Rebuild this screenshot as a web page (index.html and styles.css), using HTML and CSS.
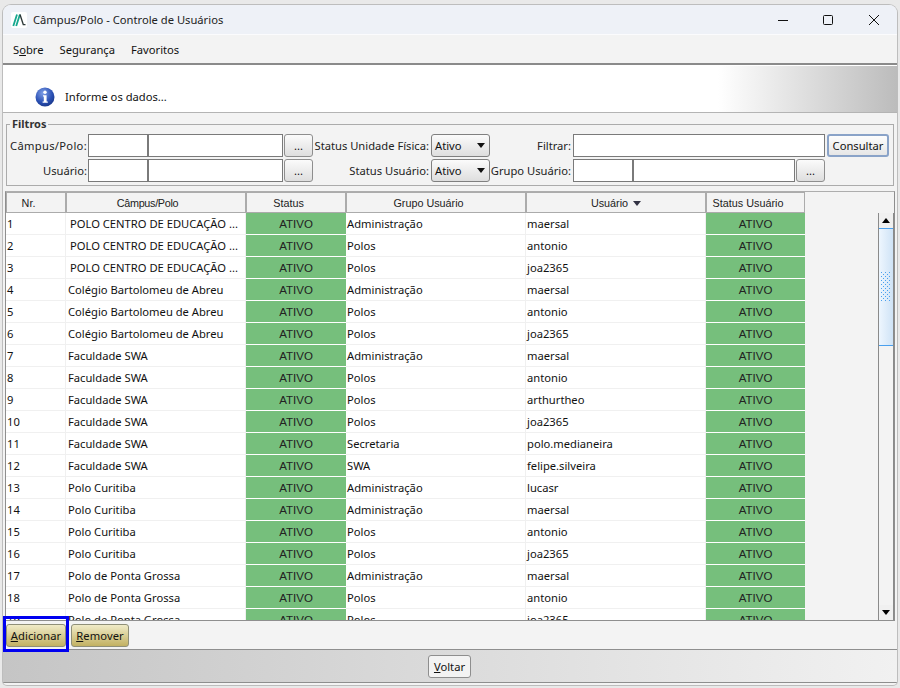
FILE: index.html
```html
<!DOCTYPE html>
<html lang="pt">
<head>
<meta charset="utf-8">
<title>Câmpus/Polo - Controle de Usuários</title>
<link rel="stylesheet" href="styles.css">
</head>
<body>
<div class="window">
  <header class="titlebar">
    <svg class="logo" width="16" height="16" viewBox="0 0 16 16"><rect width="16" height="16" rx="2" fill="#fff"/><path d="M2.3 14 6 2.5M5.2 14 8.9 2.5" stroke="#17a88e" stroke-width="1.8" fill="none"/><path d="M9 2.5 12.3 12.6H14.5" stroke="#2e3a3a" stroke-width="1.4" fill="none"/></svg>
    <span class="title">Câmpus/Polo - Controle de Usuários</span>
    <div class="winctl">
      <svg class="minbtn" width="12" height="12" viewBox="0 0 12 12"><path d="M1 6.5H11" stroke="#111" fill="none"/></svg>
      <svg width="12" height="12" viewBox="0 0 12 12"><rect x="1.5" y="1.5" width="9" height="9" rx="1" stroke="#111" fill="none"/></svg>
      <svg width="12" height="12" viewBox="0 0 12 12"><path d="M1 1 11 11M11 1 1 11" stroke="#111" fill="none"/></svg>
    </div>
  </header>
  <nav class="menubar">
    <span>S<u>o</u>bre</span><span>Segurança</span><span>Favoritos</span>
  </nav>
  <section class="infobar">
    <svg class="infoicon" width="20" height="20" viewBox="0 0 20 20">
      <defs><radialGradient id="ig" cx="0.4" cy="0.3" r="0.8"><stop offset="0" stop-color="#7f9fe6"/><stop offset="0.6" stop-color="#2a50b4"/><stop offset="1" stop-color="#14307e"/></radialGradient></defs>
      <circle cx="10" cy="10" r="9.5" fill="url(#ig)"/>
      <circle cx="10" cy="5.3" r="1.7" fill="#fff"/>
      <path d="M8 8.2H11.6V14.6H12.8V15.8H7.6V14.6H8.8V9.4H8Z" fill="#fff"/>
    </svg>
    <span>Informe os dados...</span>
  </section>
  <fieldset class="filters">
    <legend>Filtros</legend>
    <div class="frow">
      <label class="l1 wide">Câmpus/Polo:</label>
      <div class="pair"><input class="code"><input class="name"></div>
      <button class="dots">...</button>
      <label class="l2">Status Unidade Física:</label>
      <div class="select"><span>Ativo</span><i></i></div>
      <label class="l3">Filtrar:</label>
      <input class="search">
      <button class="consult">Consultar</button>
    </div>
    <div class="frow">
      <label class="l1">Usuário:</label>
      <div class="pair"><input class="code"><input class="name"></div>
      <button class="dots">...</button>
      <label class="l2">Status Usuário:</label>
      <div class="select"><span>Ativo</span><i></i></div>
      <label class="l3">Grupo Usuário:</label>
      <div class="pair"><input class="code"><input class="name2"></div>
      <button class="dots">...</button>
    </div>
  </fieldset>
  <section class="grid">
    <div class="tablewrap">
      <table>
        <colgroup><col class="c1"><col class="c2"><col class="c3"><col class="c2"><col class="c2"><col class="c4"></colgroup>
        <thead><tr><th>Nr.</th><th class="narrow">Câmpus/Polo</th><th>Status</th><th>Grupo Usuário</th><th class="sorted">Usuário <span class="sort"></span></th><th>Status Usuário</th></tr></thead>
        <tbody>
          <tr><td>1</td><td class="ind">POLO CENTRO DE EDUCAÇÃO ...</td><td class="on">ATIVO</td><td>Administração</td><td>maersal</td><td class="on">ATIVO</td></tr>
          <tr><td>2</td><td class="ind">POLO CENTRO DE EDUCAÇÃO ...</td><td class="on">ATIVO</td><td>Polos</td><td>antonio</td><td class="on">ATIVO</td></tr>
          <tr><td>3</td><td class="ind">POLO CENTRO DE EDUCAÇÃO ...</td><td class="on">ATIVO</td><td>Polos</td><td>joa2365</td><td class="on">ATIVO</td></tr>
          <tr><td>4</td><td>Colégio Bartolomeu de Abreu</td><td class="on">ATIVO</td><td>Administração</td><td>maersal</td><td class="on">ATIVO</td></tr>
          <tr><td>5</td><td>Colégio Bartolomeu de Abreu</td><td class="on">ATIVO</td><td>Polos</td><td>antonio</td><td class="on">ATIVO</td></tr>
          <tr><td>6</td><td>Colégio Bartolomeu de Abreu</td><td class="on">ATIVO</td><td>Polos</td><td>joa2365</td><td class="on">ATIVO</td></tr>
          <tr><td>7</td><td>Faculdade SWA</td><td class="on">ATIVO</td><td>Administração</td><td>maersal</td><td class="on">ATIVO</td></tr>
          <tr><td>8</td><td>Faculdade SWA</td><td class="on">ATIVO</td><td>Polos</td><td>antonio</td><td class="on">ATIVO</td></tr>
          <tr><td>9</td><td>Faculdade SWA</td><td class="on">ATIVO</td><td>Polos</td><td>arthurtheo</td><td class="on">ATIVO</td></tr>
          <tr><td>10</td><td>Faculdade SWA</td><td class="on">ATIVO</td><td>Polos</td><td>joa2365</td><td class="on">ATIVO</td></tr>
          <tr><td>11</td><td>Faculdade SWA</td><td class="on">ATIVO</td><td>Secretaria</td><td>polo.medianeira</td><td class="on">ATIVO</td></tr>
          <tr><td>12</td><td>Faculdade SWA</td><td class="on">ATIVO</td><td>SWA</td><td>felipe.silveira</td><td class="on">ATIVO</td></tr>
          <tr><td>13</td><td>Polo Curitiba</td><td class="on">ATIVO</td><td>Administração</td><td>lucasr</td><td class="on">ATIVO</td></tr>
          <tr><td>14</td><td>Polo Curitiba</td><td class="on">ATIVO</td><td>Administração</td><td>maersal</td><td class="on">ATIVO</td></tr>
          <tr><td>15</td><td>Polo Curitiba</td><td class="on">ATIVO</td><td>Polos</td><td>antonio</td><td class="on">ATIVO</td></tr>
          <tr><td>16</td><td>Polo Curitiba</td><td class="on">ATIVO</td><td>Polos</td><td>joa2365</td><td class="on">ATIVO</td></tr>
          <tr><td>17</td><td>Polo de Ponta Grossa</td><td class="on">ATIVO</td><td>Administração</td><td>maersal</td><td class="on">ATIVO</td></tr>
          <tr><td>18</td><td>Polo de Ponta Grossa</td><td class="on">ATIVO</td><td>Polos</td><td>antonio</td><td class="on">ATIVO</td></tr>
          <tr><td>19</td><td>Polo de Ponta Grossa</td><td class="on">ATIVO</td><td>Polos</td><td>joa2365</td><td class="on">ATIVO</td></tr>
        </tbody>
      </table>
    </div>
    <div class="scrollbar">
      <div class="sb-btn"><i class="up"></i></div>
      <div class="sb-thumb"><svg width="10" height="30" viewBox="0 0 10 30"><defs><pattern id="dp" width="4" height="4" patternUnits="userSpaceOnUse"><rect x="0" y="0" width="1" height="1" fill="#4aa0ee"/><rect x="2" y="2" width="1" height="1" fill="#4aa0ee"/></pattern></defs><rect width="10" height="30" fill="url(#dp)"/></svg></div>
      <div class="sb-track"></div>
      <div class="sb-btn"><i class="down"></i></div>
    </div>
  </section>
  <div class="actions">
    <button class="gold"><u>A</u>dicionar</button>
    <button class="gold"><u>R</u>emover</button>
  </div>
  <footer class="footer">
    <button class="voltar"><u>V</u>oltar</button>
  </footer>
  <div class="highlight"></div>
</div>
</body>
</html>
```
FILE: styles.css
```css
* { box-sizing: border-box; }
html, body { margin: 0; padding: 0; }
body {
  width: 900px; height: 688px; background: #e9e9e9; overflow: hidden;
  font: 11.2px "Noto Sans", "Open Sans", sans-serif; color: #111;
  padding: 5px 3px 3px 3px;
}
.window {
  position: relative; width: 894px; height: 680px; background: #f3f3f3;
  border-radius: 8px 8px 4px 4px; overflow: hidden;
  display: flex; flex-direction: column;
  box-shadow: 0 0 0 1px #bdbdbd;
}
.titlebar {
  height: 30px; flex: none; background: #eef1f7; display: flex; align-items: center;
  padding-left: 8px; border-bottom: 1px solid #fbfbfd;
}
.logo { margin-right: 6px; }
.title { color: #222; }
.winctl { margin-left: auto; display: flex; gap: 34px; padding-right: 17px; }
.minbtn { margin-right: -1px; }
.menubar {
  height: 30px; flex: none; display: flex; gap: 16px; align-items: center; padding-left: 10px;
  border-bottom: 2px solid #8a8a8a; background: #f3f3f3;
}
.infobar {
  height: 48px; flex: none; display: flex; align-items: center; padding: 15px 0 0 32px; gap: 10px;
  background: linear-gradient(90deg, #fff 0, #fff 80%, #bcbcbc 100%);
  border-bottom: 1px solid #b4b4b4; border-top: 1px solid #fff;
}
.filters {
  flex: none; margin: 5px 3px 0 3px; padding: 4px 3px 0 3px; height: 68px;
  border: 1px solid #ababab; min-width: 0;
}
.filters legend { padding: 0 2px; margin-left: 0; font-weight: 700; color: #333; line-height: 12px; font-size: 11px; }
.frow { display: flex; align-items: center; height: 23px; margin-bottom: 2px; }
label { white-space: nowrap; text-align: right; color: #222; }
.l1 { width: 77px; margin-right: 1px; flex: none; }
.wide { letter-spacing: 0.3px; }
.l2 { width: 116px; margin-right: 2px; flex: none; }
.l3 { width: 81px; margin-right: 2px; flex: none; }
.pair { display: flex; flex: none; }
.filters input {
  height: 23px; border: 1px solid #7a7a7a; background: #fff; padding: 0; margin: 0; display: block;
}
.code { width: 60px; }
.name { width: 135px; margin-left: -1px; }
.name2 { width: 162px; margin-left: -1px; }
.search { width: 252px; flex: none; }
button {
  font: inherit; color: #111; padding: 0; height: 23px; border: 1px solid #8e8e8e; border-radius: 3px;
  background: linear-gradient(#fbfbfb, #dedede);
}
.dots { width: 29px; margin: 0 0 0 1px; flex: none; line-height: 1; }
.consult { width: 62px; margin-left: 2px; flex: none; border: 2px solid #8aa3c8; background: linear-gradient(#fdfdfd, #e6e6e6); }
.select {
  width: 59px; height: 23px; flex: none; border: 1px solid #808080; border-radius: 3px; display: flex; align-items: center;
  background: linear-gradient(#fbfbfb, #dedede); padding: 0 3px; justify-content: space-between;
}
.select i { width: 0; height: 0; border-left: 4px solid transparent; border-right: 4px solid transparent; border-top: 5px solid #111; margin-right: 1px; }
.grid {
  position: relative; flex: none; margin: 5px 2px 0 2px; height: 430px; border: 1px solid #8e8e8e; border-top-color: #adadad;
  display: flex; background: #f3f3f3;
}
.tablewrap { flex: 1; overflow: hidden; }
table { border-collapse: separate; border-spacing: 0; table-layout: fixed; width: 799px; }
.c1 { width: 60px; } .c2 { width: 180px; } .c3 { width: 100px; } .c4 { width: 99px; }
th {
  height: 21px; padding: 0 15px 0 0; font: 400 10.8px "Liberation Sans", sans-serif; color: #222; background: #f3f3f3;
  border: 1px solid #ababab; text-align: center;
}
th.narrow { letter-spacing: -0.3px; padding-right: 17px; }
th.sorted { padding-right: 0; }
.sort { display: inline-block; width: 0; height: 0; border-left: 4px solid transparent; border-right: 4px solid transparent; border-top: 5px solid #334; margin-left: 2px; vertical-align: 1px; }
td {
  height: 22px; padding: 0 0 0 1px; background: #fff; border-bottom: 1px solid #f0f0f0; border-right: 1px solid #f0f0f0;
  white-space: nowrap; overflow: hidden;
}
td:nth-child(2) { padding-left: 2px; }
td.ind { padding-left: 4px; }
td.on { background: #76bf7c; text-align: center; padding: 1px 0 0 0; border-bottom: 1px solid #fff; border-right: 0; color: #222; font: 11.5px "Liberation Sans", sans-serif; }
.scrollbar { width: 16px; flex: none; margin: 21px 0 0 0; display: flex; flex-direction: column; border-left: 1px solid #8a8a8a; border-right: 1px solid #8a8a8a; }
.sb-btn { height: 15px; flex: none; background: #f0f0f0; display: flex; align-items: center; justify-content: center; }
.sb-btn i { width: 0; height: 0; border-left: 4px solid transparent; border-right: 4px solid transparent; }
.up { border-bottom: 5px solid #000; }
.down { border-top: 5px solid #000; }
.sb-thumb { height: 118px; flex: none; background: linear-gradient(90deg, #eef6fe, #cfe3f6); border: 1px solid #4aa0ee; border-width: 1px 0; display: flex; align-items: center; justify-content: center; }
.sb-track { flex: 1; background: #f3f3f3; }
.actions { height: 28px; flex: none; display: flex; gap: 5px; padding: 3px 0 0 3px; align-items: flex-start; }
.gold { height: 23px; width: 60px; border-color: #8f8f78; background: linear-gradient(#f0ebc8, #c2b162); letter-spacing: 0.1px; }
.gold + .gold { width: 58px; }
.footer {
  flex: 1; display: flex; align-items: center; justify-content: center;
  background: linear-gradient(90deg, #c5c5c5, #f1f1f1); border-top: 1px solid #8e8e8e; border-bottom: 1px solid #8e8e8e; margin: 0 0 2px 0;
}
.voltar { width: 43px; height: 23px; border-radius: 3px; background: #f3f3f3; margin: 1px 1px 0 0; }
.highlight { position: absolute; left: 0; top: 611px; width: 66px; height: 36px; border: 3px solid #0000f0; pointer-events: none; }
```
